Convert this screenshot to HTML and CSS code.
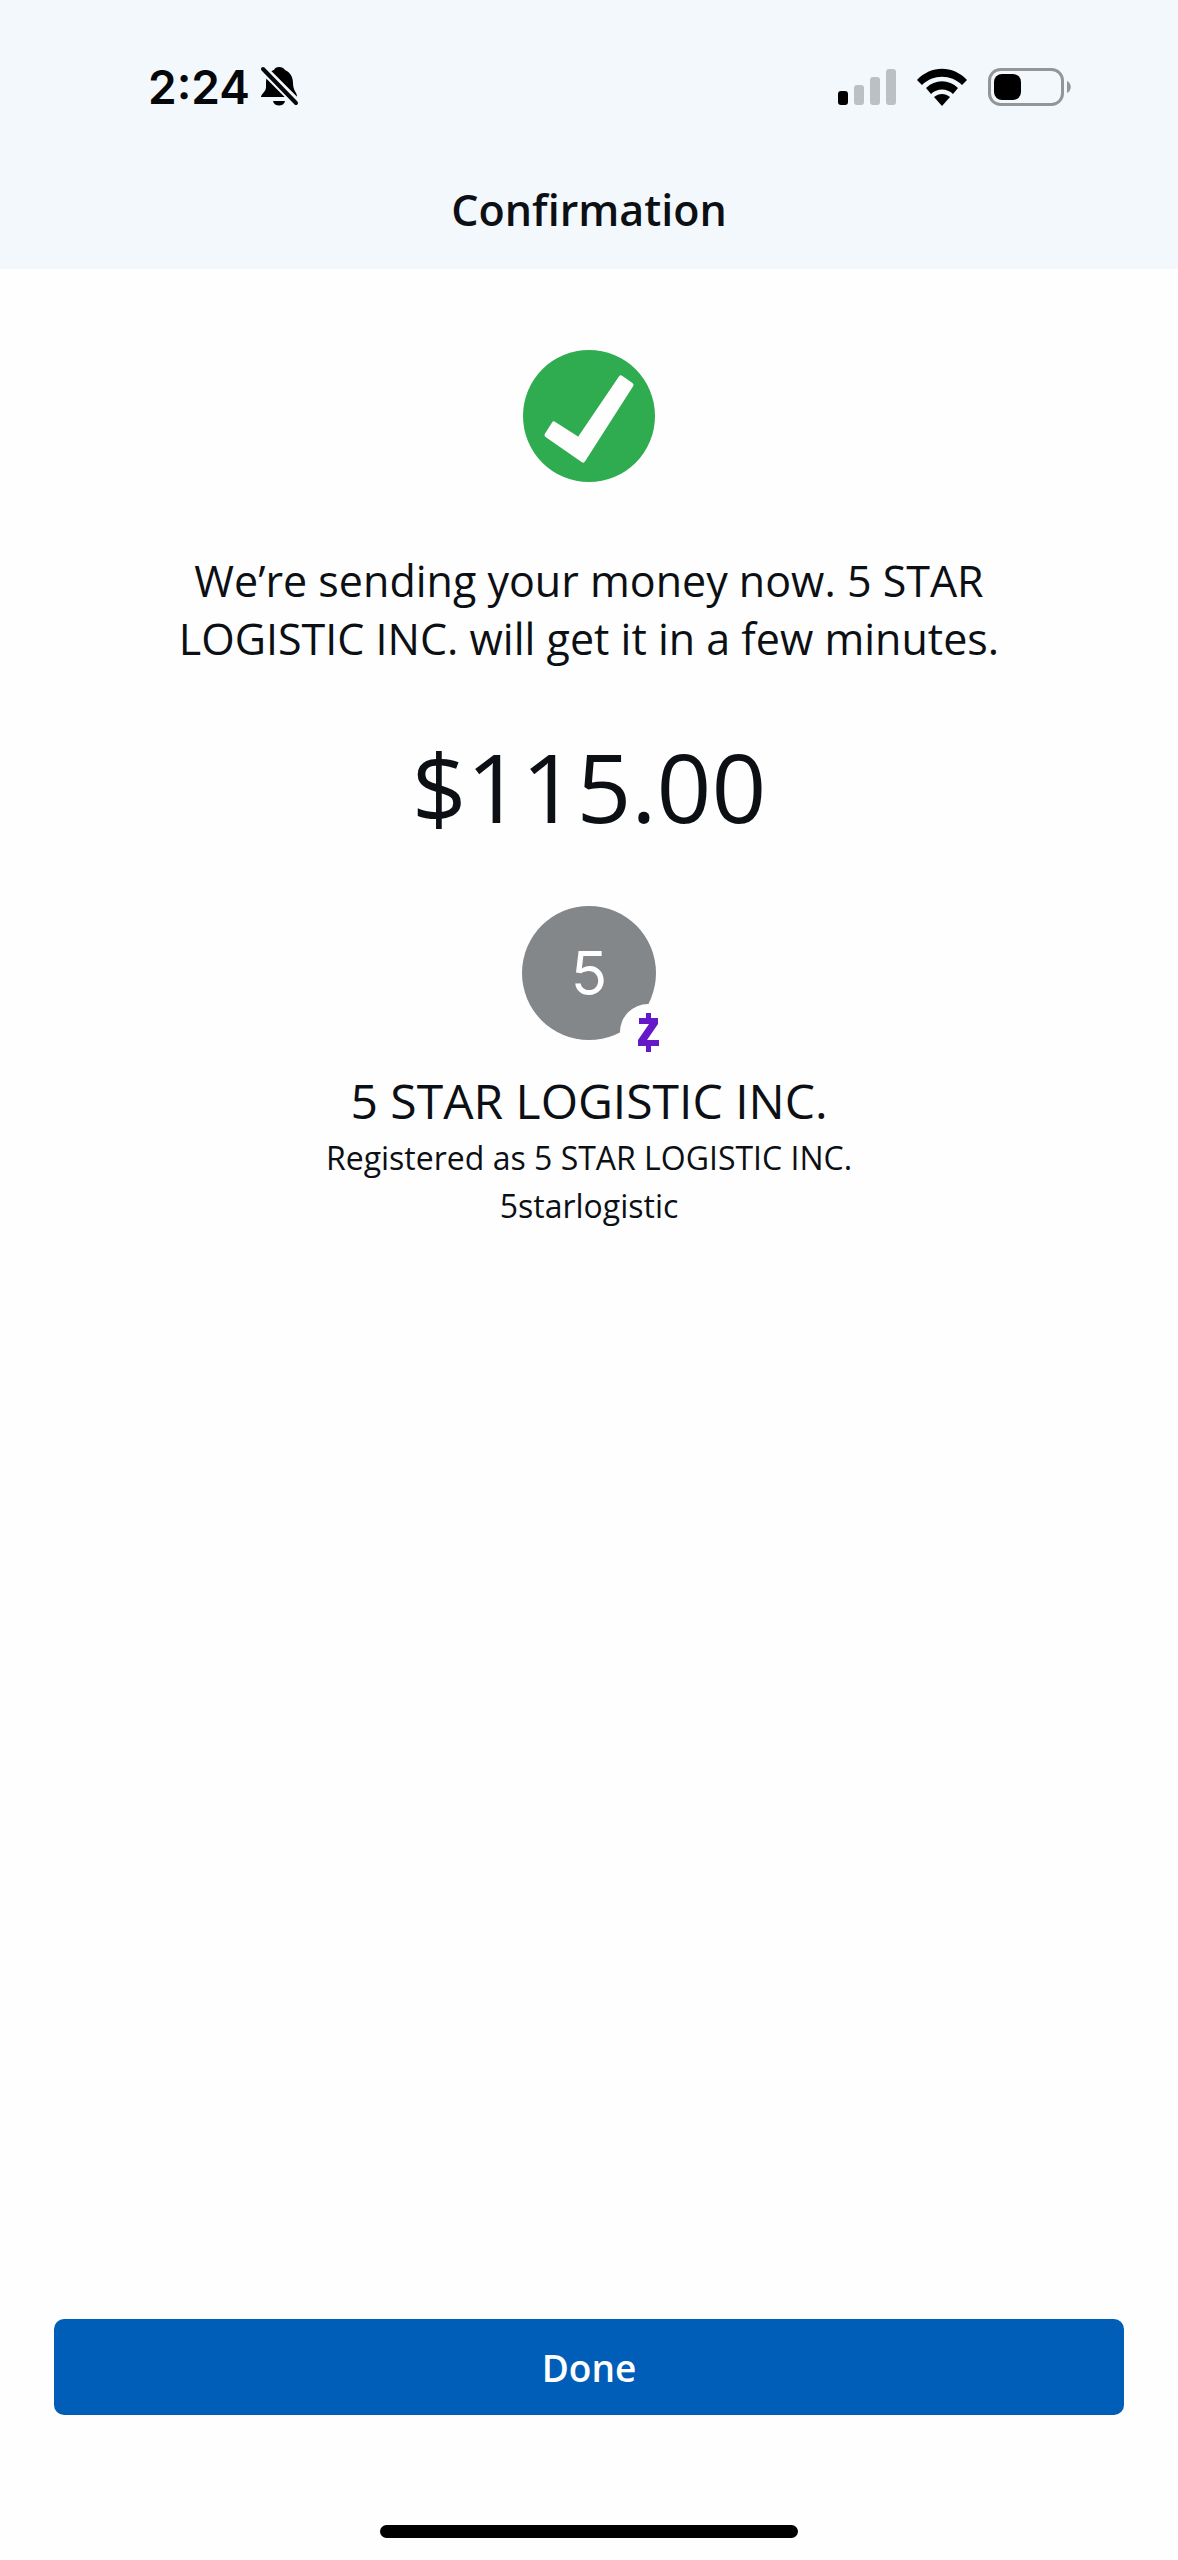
FILE: index.html
```html
<!DOCTYPE html>
<html lang="en">
<head>
<meta charset="utf-8">
<meta name="viewport" content="width=device-width, initial-scale=1">
<title>Confirmation</title>
<link rel="stylesheet" href="styles.css">
</head>
<body>
<div class="app">
  <header class="header">
    <div class="status">
      <div class="status-left">
        <span class="time">2:24</span>
        <svg class="bell" viewBox="0 0 40 44" role="img" aria-label="Silent mode">
          <path d="M1 32C1 29 6 27 6 22V18C6 10 10 6 14 5C15 1 23 1 25 5C30 7 33 12 33 18C33 26 37 27 37 32Z"/>
          <path d="M13 36H25C24 42 14 42 13 36Z"/>
          <path class="bell-gap" d="M0 1L40 41"/>
          <path class="bell-slash" d="M3 4L36 38"/>
        </svg>
      </div>
      <div class="status-right">
        <svg class="signal" viewBox="0 0 58 38" role="img" aria-label="Signal: one bar">
          <rect x="0" y="23" width="10" height="14" rx="3"/>
          <g class="signal-off">
            <rect x="16" y="17" width="10" height="20" rx="3"/>
            <rect x="32" y="9" width="10" height="28" rx="3"/>
            <rect x="48" y="1" width="10" height="36" rx="3"/>
          </g>
        </svg>
        <svg class="wifi" viewBox="0 0 52 38" role="img" aria-label="Wi-Fi">
          <path d="M1 12C15 -3 37 -3 51 12L46 17C35 6 17 6 6 17Z"/>
          <path d="M10 20C19 11 33 11 42 20L37 26C31 20 21 20 15 26Z"/>
          <path d="M18 29C23 25 29 25 34 29L26 38Z"/>
        </svg>
        <svg class="battery" viewBox="0 0 84 38" role="img" aria-label="Battery">
          <rect class="battery-case" x="1.500" y="1.500" width="73" height="35" rx="11"/>
          <rect x="6" y="6" width="27" height="26" rx="8"/>
          <path class="battery-tip" d="M79 13C84 15 84 23 79 25Z"/>
        </svg>
      </div>
    </div>
    <h1 class="title">Confirmation</h1>
  </header>
  <main class="content">
    <svg class="check" viewBox="0 0 132 132" role="img" aria-label="Success">
      <circle cx="66" cy="66" r="66"/>
      <path d="M98 28L108 35L60 110L24 85L31 74L56 90Z"/>
    </svg>
    <p class="message">We’re sending your money now. 5 STAR LOGISTIC INC. will get it in a few minutes.</p>
    <p class="amount">$115.00</p>
    <div class="avatar">
      <span>5</span>
      <svg class="badge" viewBox="0 0 56 56" role="img" aria-label="Zelle">
        <circle cx="28" cy="28" r="28"/>
        <path d="M26 9H31V14H38V20L27 36H39V42H31V48H26V42H18V36L29 20H19V14H26Z"/>
      </svg>
    </div>
    <h2 class="name">5 STAR LOGISTIC INC.</h2>
    <p class="detail">Registered as 5 STAR LOGISTIC INC.</p>
    <p class="detail">5starlogistic</p>
  </main>
  <footer class="footer">
    <button class="done" type="button">Done</button>
    <div class="home"></div>
  </footer>
</div>
</body>
</html>
```
FILE: styles.css
```css
* {
  box-sizing: border-box;
}

body {
  margin: 0;
  background: #fefefe;
  color: #0c1014;
  font-family: "Open Sans", sans-serif;
}

h1,
h2,
p {
  margin: 0;
  font-weight: 400;
}

svg {
  display: block;
}

.app {
  display: flex;
  flex-direction: column;
  min-height: 100vh;
}

.header {
  padding: 55px 106px 29px 148px;
  background: #f3f8fc;
}

.status {
  display: flex;
  justify-content: space-between;
  align-items: center;
  height: 64px;
}

.status-left,
.status-right {
  display: flex;
  align-items: center;
}

.status-left {
  gap: 10px;
}

.status-right {
  gap: 20px;
}

.time {
  color: #05070a;
  font-family: Inter, sans-serif;
  font-size: 46px;
  font-weight: 600;
  line-height: 64px;
}

.bell {
  width: 40px;
  height: 44px;
}

.bell-gap,
.bell-slash {
  fill: none;
  stroke-linecap: round;
}

.bell-gap {
  stroke: #f3f8fc;
  stroke-width: 9;
}

.bell-slash {
  stroke: #05070a;
  stroke-width: 4;
}

.signal {
  width: 58px;
  height: 38px;
}

.signal-off {
  fill: #bcc0c3;
}

.wifi {
  width: 52px;
  height: 38px;
}

.battery {
  width: 84px;
  height: 38px;
}

.battery-case {
  fill: none;
  stroke: #929698;
  stroke-width: 3;
}

.battery-tip {
  fill: #929698;
}

.title {
  margin: 61px -106px 0 -148px;
  font-size: 43px;
  font-weight: 600;
  line-height: 60px;
  text-align: center;
  font-variant-ligatures: none;
}

.content {
  display: flex;
  flex: 1;
  flex-direction: column;
  align-items: center;
  padding: 81px 150px 40px;
  text-align: center;
}

.check {
  width: 132px;
  height: 132px;
  fill: #2fac4f;
}

.check path {
  fill: #fefefe;
  stroke: #fefefe;
  stroke-width: 5;
  stroke-linejoin: round;
}

.message {
  max-width: 860px;
  margin-top: 70px;
  font-size: 43px;
  line-height: 58px;
}

.amount {
  margin-top: 53px;
  font-size: 96px;
  line-height: 130px;
}

.avatar {
  position: relative;
  display: flex;
  align-items: center;
  justify-content: center;
  width: 134px;
  height: 134px;
  margin-top: 55px;
  border-radius: 50%;
  background: #838789;
  color: #fefefe;
  font-family: Inter, sans-serif;
  font-size: 60px;
}

.badge {
  position: absolute;
  right: -20px;
  bottom: -20px;
  width: 56px;
  height: 56px;
  fill: #6418c8;
}

.badge circle {
  fill: #fefefe;
}

.name {
  margin-top: 28px;
  font-size: 48px;
  line-height: 66px;
}

.detail {
  font-size: 32px;
  line-height: 48px;
}

.footer {
  display: flex;
  flex-direction: column;
  align-items: center;
  gap: 110px;
  padding: 0 54px 22px;
}

.done {
  width: 100%;
  height: 96px;
  padding: 0;
  border: 0;
  border-radius: 10px;
  background: #005eb9;
  color: #fefefe;
  font-family: inherit;
  font-size: 37px;
  font-weight: 600;
}

.home {
  width: 39%;
  height: 13px;
  border-radius: 8px;
  background: #000;
}
```
